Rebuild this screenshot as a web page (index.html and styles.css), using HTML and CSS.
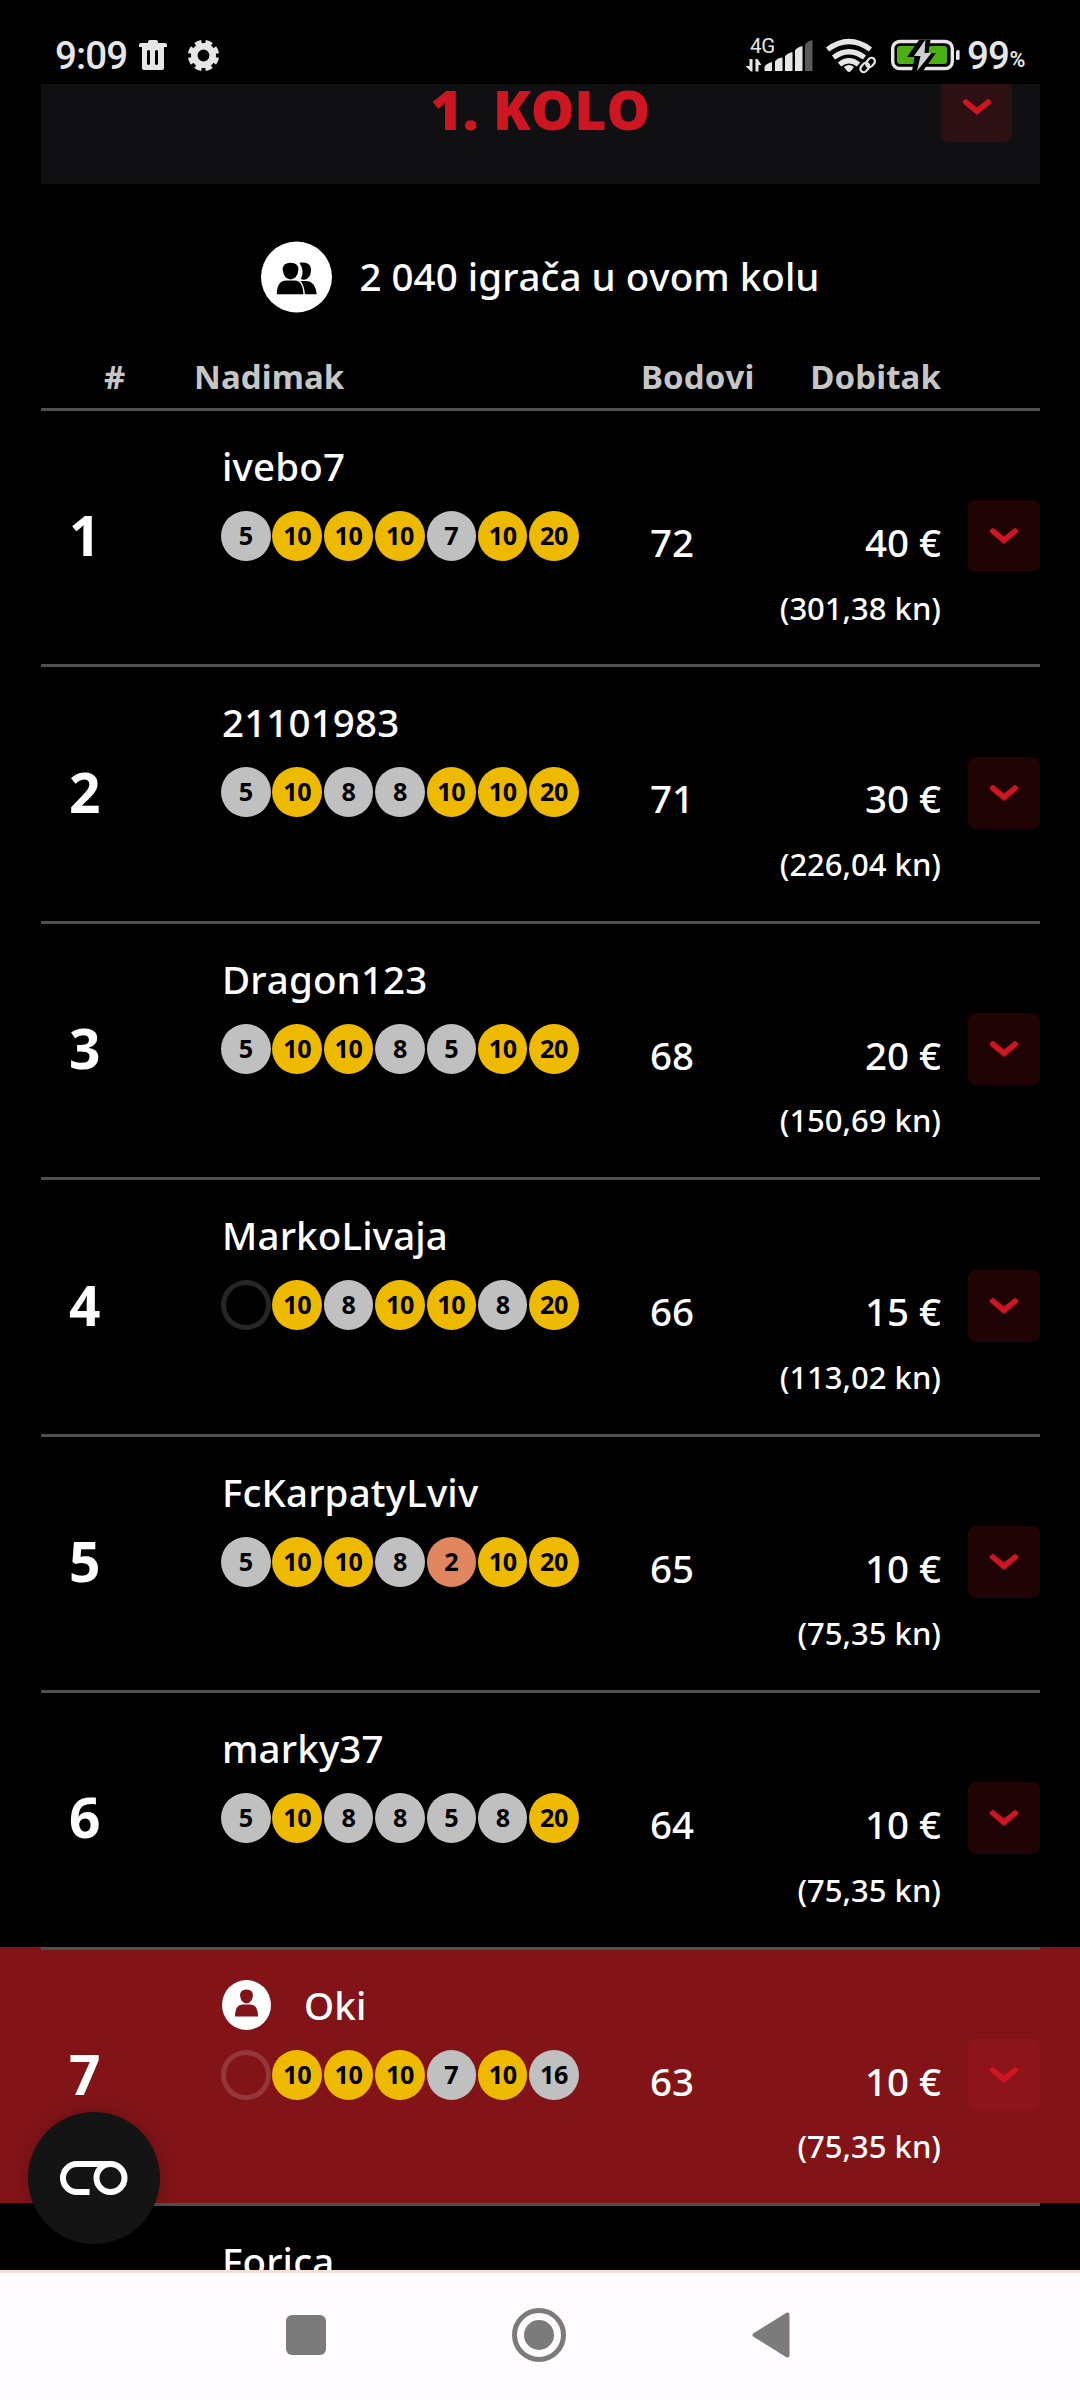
FILE: index.html
```html
<!DOCTYPE html>
<html lang="hr">
<head>
<meta charset="utf-8">
<title>1. kolo</title>
<link rel="stylesheet" href="styles.css">
</head>
<body>
<svg class="defs" aria-hidden="true">
  <symbol id="chev" viewBox="0 0 30 18"><path d="M.5 3.600Q.5 2.800 4 .8L15 9.500 26 .8Q29.500 2.800 29.500 3.600T28 6.200L15 17 2 6.200Q.5 4.400.5 3.600z" fill="#cd1622"/></symbol>
</svg>
<header class="status">
  <span class="clock">9:09</span>
  <svg class="trash" width="28" height="30" viewBox="0 0 28 30"><path fill="#e6e6e6" fill-rule="evenodd" d="M9 2q0-2 2-2h6q2 0 2 2v1h7q2 0 2 2v2h-3v21q0 2-2 2H5q-2 0-2-2V7H0V5q0-2 2-2h7zM8 11v13q1.500 2 3 0V11q-1.500-2-3 0zm8 0v13q1.500 2 3 0V11q-1.500-2-3 0z"/></svg>
  <svg class="gear" width="31" height="31" viewBox="0 0 31 31"><g fill="none" stroke="#e6e6e6"><circle cx="15.500" cy="15.500" r="9.200" stroke-width="6.600"/><circle cx="15.500" cy="15.500" r="13.600" stroke-width="4" pathLength="80" stroke-dasharray="6.200 3.800" stroke-dashoffset="-1.900"/></g></svg>
  <svg class="indicators" width="225" height="50" viewBox="735 30 225 50">
    <text x="750" y="52.500" class="net">4G</text>
    <path fill="#e6e6e6" d="M749.500 59h3v12.500h-1.500L745.500 66h4zM755.500 71.500h3V65h3l-4-6h-2zM764.500 71v-4q1-3 7.500-5v9zM775 71V61.500q2-3.500 7.500-4V71zM785 71V56.500q2-3.500 7.500-4.500v19zM795 71V50.500q2-3.500 7.500-4.500v25z"/>
    <path fill="#5a5a5a" d="M805 71V44.500q2-3.500 7.500-4.500v31z"/>
    <g fill="none" stroke="#e6e6e6" stroke-width="5.200">
      <path d="M827.500 49.500q21.500-16 43 0"/><path d="M833.500 57.500q15.500-11.500 31 0"/><path d="M839.500 64.500q9.500-7.500 19 0"/>
    </g>
    <path fill="#e6e6e6" d="M844 67q5-4 10 0l-3 4q-2 2-4 0z"/>
    <path d="M862 70l9-9" stroke="#000" stroke-width="6"/>
    <g fill="none" stroke="#e6e6e6" stroke-width="2.200"><rect x="-5" y="-3.400" width="10" height="6.800" rx="3.400" transform="translate(870.500 62.500) rotate(-50)"/><rect x="-5" y="-3.400" width="10" height="6.800" rx="3.400" transform="translate(864.800 67.500) rotate(-50)"/></g>
    <rect x="892.700" y="41.500" width="59.600" height="27" rx="7" fill="none" stroke="#e6e6e6" stroke-width="3.400"/>
    <rect x="897" y="46" width="50" height="18" rx="3" fill="#4caf14"/>
    <rect x="956" y="50" width="3.600" height="10" rx="1.500" fill="#e6e6e6"/>
    <path d="M919 40L907 57h7.500l-2.500 14h11L936 53h-7.500l2-13z" fill="#000"/>
    <path fill="#d0d0d0" d="M925.500 39.500L914 56h6.500l-3.500 15L931.500 53h-7z"/>
  </svg>
  <span class="level">99</span><span class="percent">%</span>
</header>
<main class="page">
  <section class="round"><h1>1. KOLO</h1><span class="btn"><svg width="30" height="18"><use href="#chev"/></svg></span></section>
  <div class="players">
    <svg width="71" height="72" viewBox="0 0 72 72"><circle cx="36" cy="36" r="36" fill="#fff"/><path fill="#000" d="M39 21.500q10-1 11.500 5 1 8-4 11.500-3 1.500-6 0 4-8-1.500-16.500zM44 40q11-1 12.500 13.500h-12Q44 44 40 40zM30 21.500q8 0 8 7-1 9.500-8 10-7-.5-8-10 0-7 8-7zM16 53.500Q16 39.500 26 39.500h8q8.500 0 9 14z"/></svg>
    <p>2 040 igrača u ovom kolu</p>
  </div>
  <div class="thead"><span>#</span><span>Nadimak</span><span>Bodovi</span><span>Dobitak</span></div>
  <div id="rows"></div>
</main>
<nav class="navbar">
  <svg width="40" height="40"><rect width="40" height="40" rx="6" fill="#7b7b7b"/></svg>
  <svg width="54" height="54"><circle cx="27" cy="27" r="24.500" fill="none" stroke="#7b7b7b" stroke-width="5"/><circle cx="27" cy="27" r="15" fill="#7b7b7b"/></svg>
  <svg width="38" height="46" viewBox="0 0 38 46"><path d="M35.500 2.500v41L2.500 23z" fill="#7b7b7b" stroke="#7b7b7b" stroke-width="4" stroke-linejoin="round"/></svg>
</nav>
<div class="fab"><svg width="68" height="34" viewBox="0 0 68 34"><g fill="none" stroke="#fff" stroke-width="6"><path d="M29.500 31H17A14 14 0 0 1 17 3h33.500"/><circle cx="50.500" cy="17" r="14"/></g></svg></div>
<script src="rows.js"></script>
</body>
</html>
```
FILE: styles.css
```css
body{margin:0;background:#000;color:#fff;font:500 38.500px/40px "Noto Sans",sans-serif;font-kerning:none;height:2400px;overflow:hidden;position:relative;display:flex;flex-direction:column}
.defs{display:none}
.status{display:flex;align-items:center;height:58px;padding:26px 0 0 55px;flex:none;color:#e6e6e6}
.clock,.level{font:500 38.500px/58px Roboto,sans-serif;letter-spacing:-.9px;padding-top:2px}
.clock{width:84px}
.gear{margin-left:21px}
.indicators{margin-left:516px}
.level{margin-left:7px;width:42.500px}
.percent{font:600 21.500px/58px Roboto,sans-serif;padding-top:10px}
.net{font:400 20.500px Roboto,sans-serif;fill:#e6e6e6;letter-spacing:-.3px}
.page{height:2186px;flex:none;overflow:hidden;padding:0 40px 0 41px}
.round{height:113px;margin-top:-13px;background:#101012;display:grid;grid-template-columns:99px 1fr 99px;align-items:start}
.round h1{grid-column:2;margin:0;font-size:55px;line-height:75px;font-weight:900;text-align:center;color:#cd1622}
.btn{width:72px;height:72px;border-radius:8px;background:rgba(205,22,34,.15);display:flex;align-items:center;justify-content:center}
.round .btn{width:71px;height:71px}
.players{display:flex;align-items:center;justify-content:center;gap:27px;padding-top:57px;height:72px}
.players p{margin:0 0 2px;letter-spacing:.04px}
.thead{display:grid;grid-template-columns:90px 447px 1fr auto;padding:44px 99px 11px 63px;font-size:33px;font-weight:700;color:#c6c6c6;letter-spacing:.1px}
.row{box-sizing:border-box;height:256.450px;border-top:3px solid #505050;padding-left:28px;display:grid;grid-template-columns:152px 429px 120px 171px 99px}
.row.me{background:#821418;box-shadow:-41px 0 #821418,41px 0 #821418}
.rank{font-size:55px;font-weight:700;align-self:center;margin-bottom:5px}
.who{padding-top:35px}
.name{display:flex;align-items:center;gap:33px;height:40px;padding-left:1px;letter-spacing:.15px}
.balls{display:flex;gap:1.900px;margin-top:25px}
.ball{box-sizing:border-box;width:49.500px;height:50px;border-radius:50%;background:#c0c0c0;color:#000;font-size:25.200px;line-height:48px;letter-spacing:-.4px;font-weight:700;text-align:center}
.ball.gold{background:#edba00}
.ball.bronze{background:#e0875f}
.ball.empty{background:none;border:5px solid rgba(255,255,255,.15)}
.points{padding-top:111px}
.prize{padding-top:111px;text-align:right;white-space:nowrap;display:flex;flex-direction:column;align-items:flex-end;gap:25.500px}
.kn{font-size:31px}
.row .btn{align-self:center;justify-self:end;margin-bottom:3px}
.navbar{height:127px;flex:none;border-top:3px solid #f1e0d6;background:#fffbff;display:grid;grid-template-columns:40px 54px 38px;column-gap:186px;align-items:center;padding-left:286px}
.navbar svg{margin-bottom:3px}
.fab{position:absolute;left:28px;top:2112px;width:132px;height:132px;border-radius:50%;background:#141414;box-shadow:0 0 20px rgba(0,0,0,.22);display:flex;align-items:center;justify-content:center}
```
FILE: rows.js
```js
const players = [
  ["ivebo7", [5, 10, 10, 10, 7, 10, 20], 72, "40 €", "301,38"],
  ["21101983", [5, 10, 8, 8, 10, 10, 20], 71, "30 €", "226,04"],
  ["Dragon123", [5, 10, 10, 8, 5, 10, 20], 68, "20 €", "150,69"],
  ["MarkoLivaja", [0, 10, 8, 10, 10, 8, 20], 66, "15 €", "113,02"],
  ["FcKarpatyLviv", [5, 10, 10, 8, 2, 10, 20], 65, "10 €", "75,35"],
  ["marky37", [5, 10, 8, 8, 5, 8, 20], 64, "10 €", "75,35"],
  ["Oki", [0, 10, 10, 10, 7, 10, 16], 63, "10 €", "75,35"],
  ["Forica", [], "", "", ""]
];
const avatar = '<svg width="49" height="50" viewBox="0 0 49 50"><ellipse cx="24.500" cy="25" rx="24.500" ry="25" fill="#fff"/><path fill="#821418" d="M24.500 9.500q6.500 0 6.500 6-1 7.500-6.500 8-5.500-.5-6.500-8 0-6 6.500-6zM13 36.500Q13 24.500 21 24.500h7q8 0 8 12z"/></svg>';
const kind = n => n === 0 ? "empty" : n === 10 || n === 20 ? "gold" : n < 5 ? "bronze" : "silver";
document.getElementById("rows").innerHTML = players.map(([name, balls, points, prize, kn], i) => {
  const me = name === "Oki";
  const last = i === 7;
  return `<div class="row${me ? " me" : ""}">
    <div class="rank">${last ? "" : i + 1}</div>
    <div class="who"><div class="name">${me ? avatar : ""}<span>${name}</span></div>
    <div class="balls">${balls.map(n => `<span class="ball ${kind(n)}">${n || ""}</span>`).join("")}</div></div>
    <div class="points">${points}</div>
    <div class="prize"><span>${prize}</span><span class="kn">${kn ? "(" + kn + " kn)" : ""}</span></div>
    ${last ? "" : '<span class="btn"><svg width="30" height="18"><use href="#chev"/></svg></span>'}
  </div>`;
}).join("");
```
